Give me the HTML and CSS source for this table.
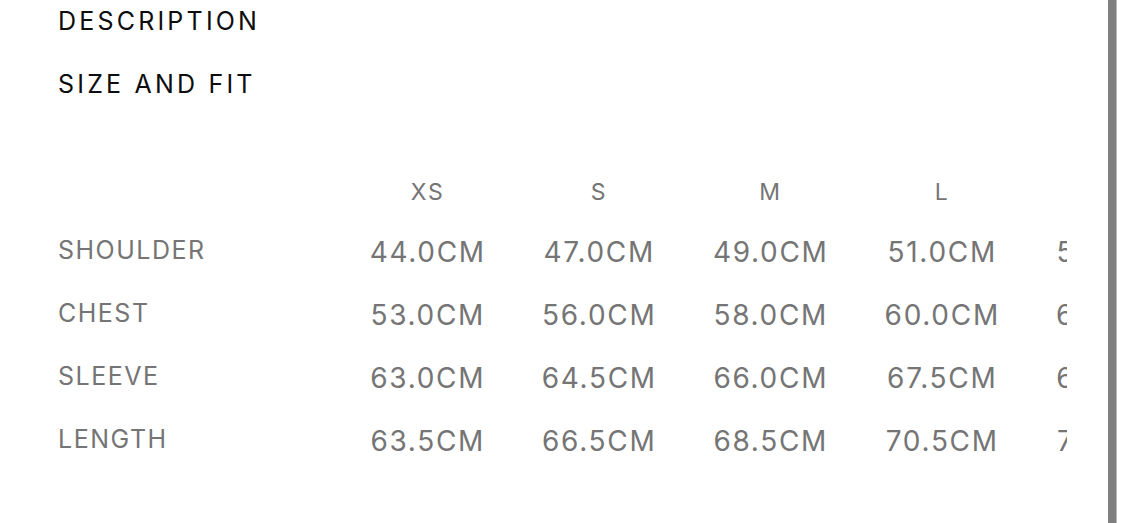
FILE: index.html
```html
<!DOCTYPE html>
<html lang="en">
<head>
<meta charset="utf-8">
<title>Size and fit</title>
<link rel="stylesheet" href="styles.css">
</head>
<body>
<div class="page">
  <main class="content">
    <div class="section-title">DESCRIPTION</div>
    <div class="section-title">SIZE AND FIT</div>
    <div class="table-wrap">
      <div class="size-table">
        <div class="cell head"></div>
        <div class="cell head">XS</div>
        <div class="cell head">S</div>
        <div class="cell head">M</div>
        <div class="cell head">L</div>
        <div class="cell head">XL</div>

        <div class="cell label">SHOULDER</div>
        <div class="cell value">44.0CM</div>
        <div class="cell value">47.0CM</div>
        <div class="cell value">49.0CM</div>
        <div class="cell value">51.0CM</div>
        <div class="cell value">53.0CM</div>

        <div class="cell label">CHEST</div>
        <div class="cell value">53.0CM</div>
        <div class="cell value">56.0CM</div>
        <div class="cell value">58.0CM</div>
        <div class="cell value">60.0CM</div>
        <div class="cell value">62.0CM</div>

        <div class="cell label">SLEEVE</div>
        <div class="cell value">63.0CM</div>
        <div class="cell value">64.5CM</div>
        <div class="cell value">66.0CM</div>
        <div class="cell value">67.5CM</div>
        <div class="cell value">69.0CM</div>

        <div class="cell label">LENGTH</div>
        <div class="cell value">63.5CM</div>
        <div class="cell value">66.5CM</div>
        <div class="cell value">68.5CM</div>
        <div class="cell value">70.5CM</div>
        <div class="cell value">72.5CM</div>
      </div>
    </div>
  </main>
  <div class="scrollbar"></div>
</div>
</body>
</html>
```

FILE: styles.css
```css
html, body {
  margin: 0;
  padding: 0;
  background: #ffffff;
}

body {
  font-family: Inter, "Noto Sans", "Liberation Sans", sans-serif;
  -webkit-font-smoothing: antialiased;
}

.page {
  display: flex;
  height: 523px;
  overflow: hidden;
}

.content {
  width: 1067px;
  flex: 0 0 1067px;
  padding-left: 58px;
  box-sizing: border-box;
  display: flex;
  flex-direction: column;
  gap: 21px;
}

.section-title {
  font-size: 25px;
  line-height: 42px;
  letter-spacing: 3.2px;
  color: #0d0d0d;
}

.table-wrap {
  overflow: hidden;
  margin-top: 40px;
}

.size-table {
  display: grid;
  grid-template-columns: 284px repeat(5, 171.5px);
  grid-template-rows: 52px repeat(4, 63px);
  width: max-content;
}

.cell {
  display: flex;
  align-items: center;
  color: #757575;
  white-space: nowrap;
}

.head {
  justify-content: center;
  font-size: 23px;
  letter-spacing: 2px;
}

.label {
  font-size: 25px;
  letter-spacing: 1.5px;
}

.value {
  justify-content: center;
  font-size: 28px;
  letter-spacing: 1.7px;
  padding-top: 5px;
}

.scrollbar {
  flex: 0 0 8px;
  margin-left: 41px;
  background: #7f7f7f;
  border-right: 1px solid #b5b5b5;
}
```
